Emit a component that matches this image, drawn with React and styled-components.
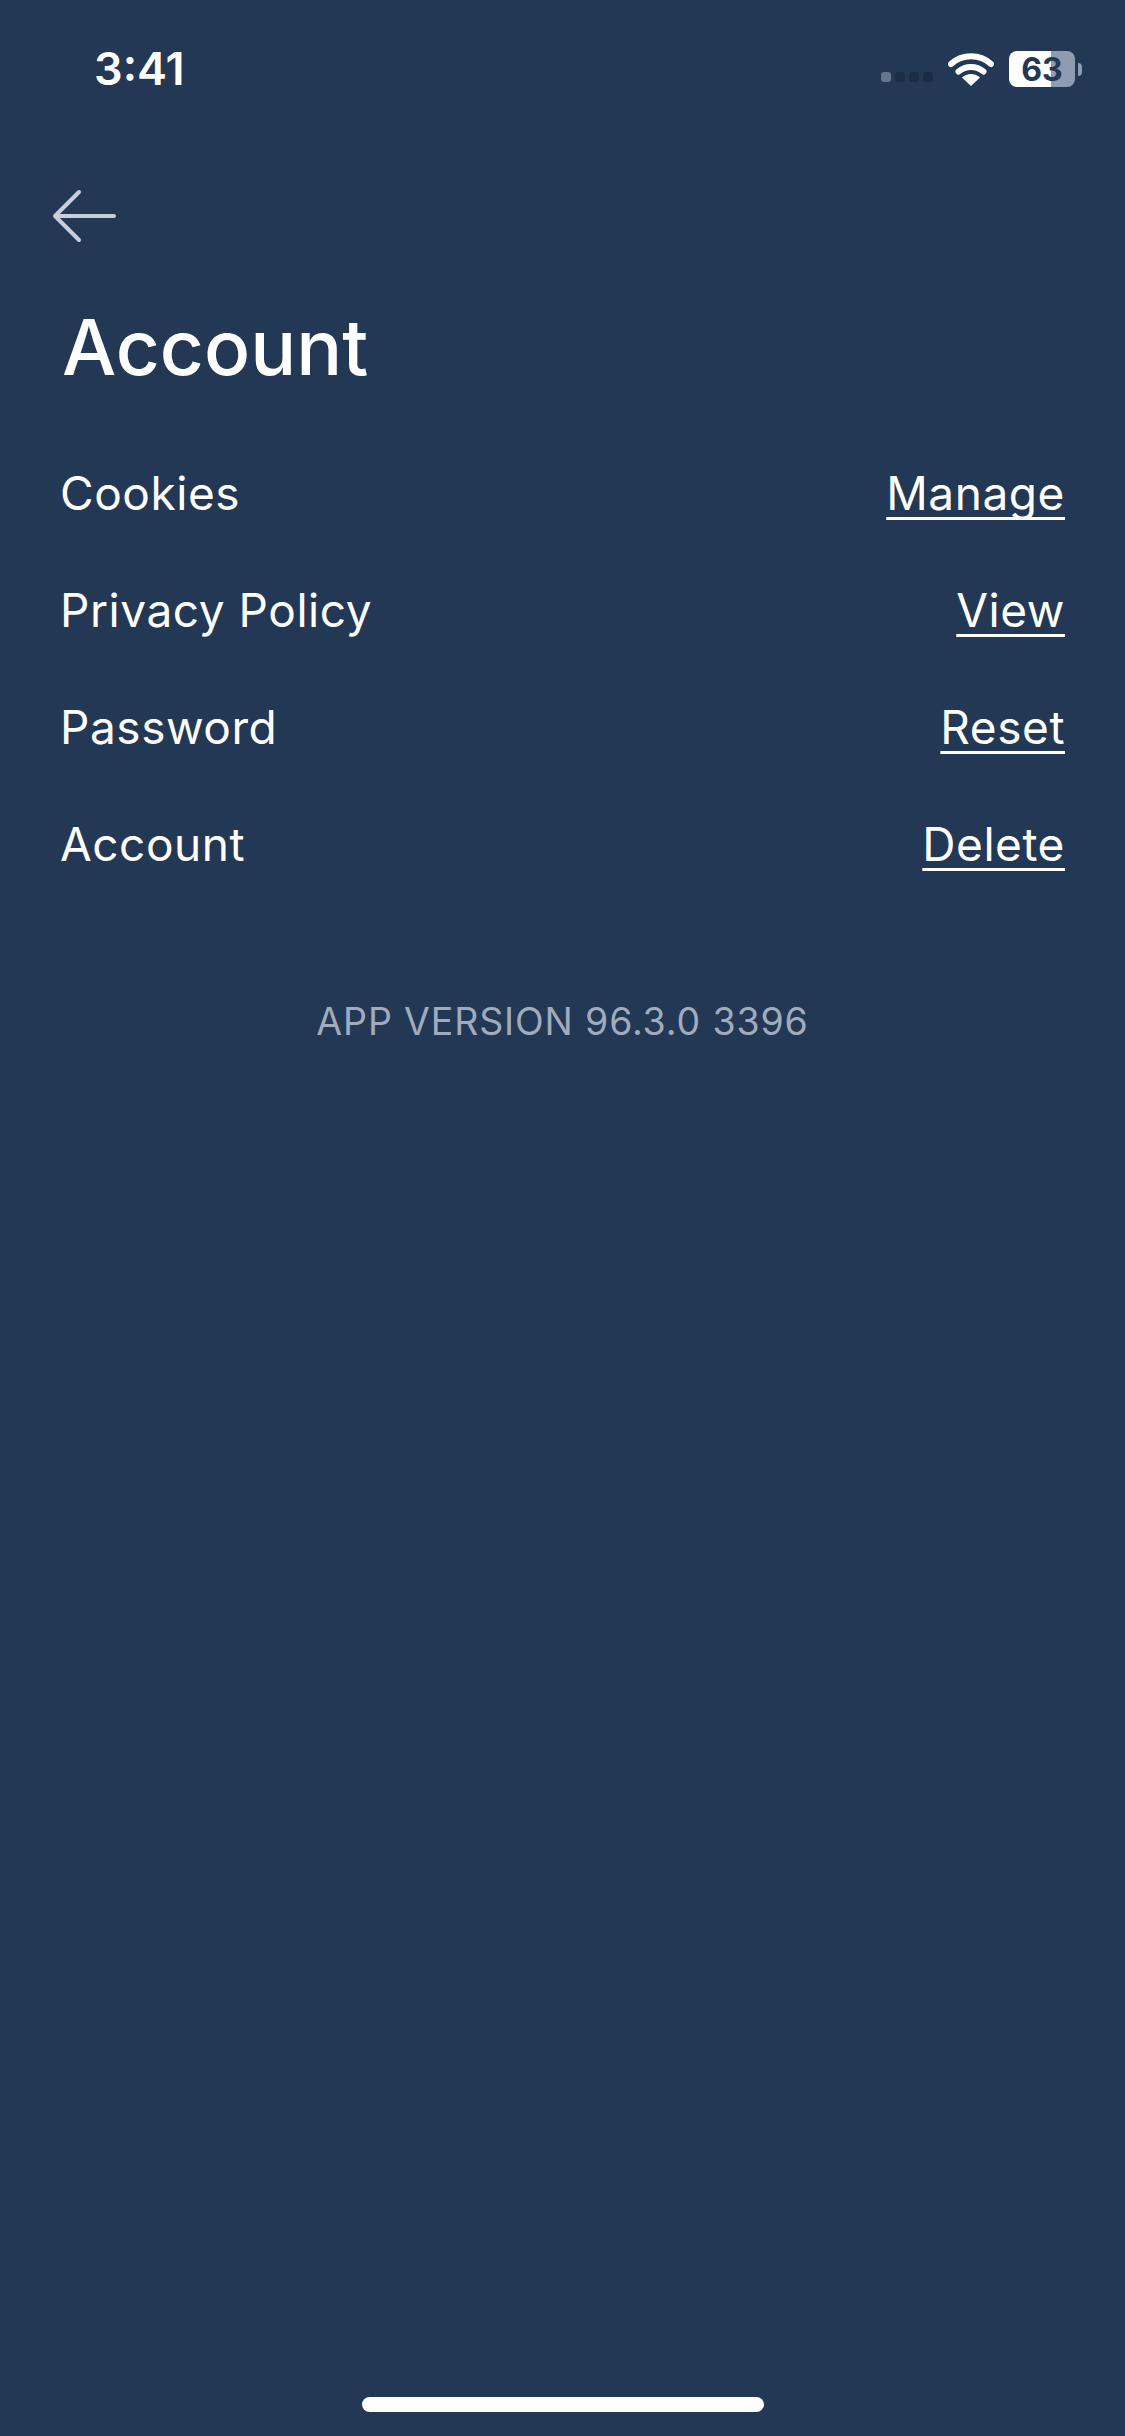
import styled, { createGlobalStyle } from "styled-components";

const GlobalStyle = createGlobalStyle`
  html, body {
    margin: 0;
    padding: 0;
    background: #233855;
  }
`;

const rows = [
  { label: "Cookies", action: "Manage" },
  { label: "Privacy Policy", action: "View" },
  { label: "Password", action: "Reset" },
  { label: "Account", action: "Delete" },
];

const Page = styled.div`
  width: 1125px;
  height: 2436px;
  box-sizing: border-box;
  display: flex;
  flex-direction: column;
  background: #233855;
  color: #fff;
  font-family: Inter, "Liberation Sans", sans-serif;
  overflow: hidden;
`;

const StatusBar = styled.div`
  height: 50px;
  margin-top: 44px;
  padding: 0 43px 0 94px;
  display: flex;
  align-items: center;
  justify-content: space-between;
`;

const Time = styled.span`
  font-size: 45px;
  font-weight: 600;
  line-height: 50px;
`;

const StatusIcons = styled.div`
  display: flex;
  align-items: center;
`;

const Signal = styled.div`
  display: flex;
  gap: 4px;
  margin: 16px 15px 0 0;
`;

const SignalDot = styled.span`
  width: 10px;
  height: 10px;
  border-radius: 3px;
  background: ${(p) => (p.$on ? "#65768f" : "#1b2c47")};
`;

const Wifi = styled.svg`
  width: 46px;
  height: 34px;
  margin-right: 15px;
`;

const Battery = styled.div`
  width: 66px;
  height: 36px;
  border-radius: 8px;
  display: flex;
  align-items: center;
  justify-content: center;
  background: linear-gradient(90deg, #fff 63%, #8e9bb0 63%);
  color: #233855;
  font-size: 32px;
  font-weight: 700;
`;

const BatteryTip = styled.span`
  width: 4px;
  height: 13px;
  margin-left: 3px;
  border-radius: 0 4px 4px 0;
  background: #8e9bb0;
`;

const BackButton = styled.button`
  all: unset;
  display: block;
  width: 66px;
  height: 56px;
  margin: 95px 0 0 52px;
`;

const Title = styled.h1`
  margin: 57px 0 0 62px;
  font-size: 76.5px;
  font-weight: 500;
  line-height: 90px;
`;

const List = styled.div`
  margin-top: 42px;
  padding: 0 60px;
  display: flex;
  flex-direction: column;
`;

const Row = styled.div`
  height: 117px;
  display: flex;
  align-items: center;
  justify-content: space-between;
  font-size: 46px;
  letter-spacing: 0.55px;
`;

const ActionLink = styled.a`
  color: #fff;
  text-decoration: underline;
  text-decoration-thickness: 3px;
  text-underline-offset: 7px;
  text-decoration-skip-ink: none;
`;

const Version = styled.div`
  margin-top: 95px;
  text-align: center;
  font-size: 37.5px;
  letter-spacing: 0.85px;
  line-height: 50px;
  color: #a0abbc;
`;

const HomeBar = styled.div`
  width: 402px;
  height: 15px;
  margin: auto auto 24px;
  border-radius: 8px;
  background: #fff;
`;

export default function App() {
  return (
    <Page>
      <GlobalStyle />
      <StatusBar>
        <Time>3:41</Time>
        <StatusIcons>
          <Signal>
            <SignalDot $on />
            <SignalDot />
            <SignalDot />
            <SignalDot />
          </Signal>
          <Wifi viewBox="0 0 46 34">
            <path
              d="M3 12 A30 30 0 0 1 43 12 M10.5 19.5 A19.5 19.5 0 0 1 35.5 19.5"
              fill="none"
              stroke="#fff"
              strokeWidth="6"
              strokeLinecap="round"
            />
            <path d="M23 34 L14 25.5 A13 13 0 0 1 32 25.5 Z" fill="#fff" />
          </Wifi>
          <Battery>63</Battery>
          <BatteryTip />
        </StatusIcons>
      </StatusBar>
      <BackButton aria-label="Back">
        <svg width="66" height="56" viewBox="0 0 66 56" fill="none">
          <path
            d="M27 3 L3 27 L27 51 M3 27 H62"
            stroke="#c8cfd9"
            strokeWidth="4"
            strokeLinecap="round"
            strokeLinejoin="round"
          />
        </svg>
      </BackButton>
      <Title>Account</Title>
      <List>
        {rows.map((row) => (
          <Row key={row.label}>
            <span>{row.label}</span>
            <ActionLink>{row.action}</ActionLink>
          </Row>
        ))}
      </List>
      <Version>APP VERSION 96.3.0 3396</Version>
      <HomeBar />
    </Page>
  );
}
